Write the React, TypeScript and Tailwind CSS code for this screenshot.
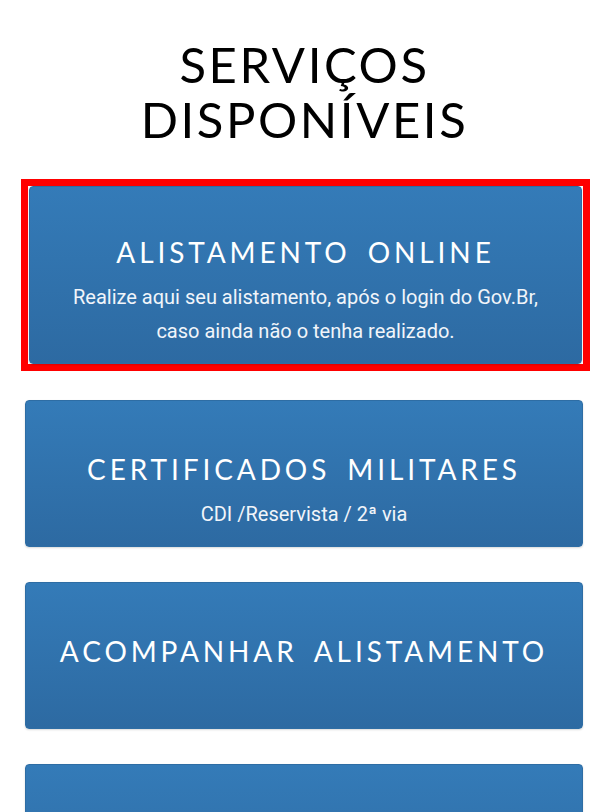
import React from 'react';

interface Service {
  title: string;
  lines: string[];
  highlighted?: boolean;
}

const services: Service[] = [
  {
    title: 'ALISTAMENTO ONLINE',
    lines: ['Realize aqui seu alistamento, após o login do Gov.Br,', 'caso ainda não o tenha realizado.'],
    highlighted: true,
  },
  { title: 'CERTIFICADOS MILITARES', lines: ['CDI /Reservista / 2ª via'] },
  { title: 'ACOMPANHAR ALISTAMENTO', lines: [] },
  { title: 'CONSULTAR SITUAÇÃO', lines: [] },
];

function ServiceCard({ service }: { service: Service }) {
  return (
    <a
      href="#"
      className={`block min-h-[147px] rounded-[4px] border border-[#2e6da4] bg-gradient-to-b from-[#347bb8] to-[#2d6aa2] px-2 pb-[15px] text-center text-white shadow-[0_1px_2px_rgba(0,0,0,0.15)] ${
        service.highlighted ? 'pt-[47px]' : 'pt-[50px]'
      }`}
    >
      <div className="whitespace-nowrap font-['Lato','Liberation_Sans',sans-serif] text-[28px] leading-[36px] tracking-[3.9px] [word-spacing:6px]">
        {service.title}
      </div>
      {service.lines.length > 0 && (
        <div className="mt-[10px] font-['Roboto','Liberation_Sans',sans-serif] text-[20px] leading-[34px] text-[#f1f5fa]">
          {service.lines.map(line => (
            <div key={line}>{line}</div>
          ))}
        </div>
      )}
    </a>
  );
}

export default function App() {
  return (
    <div className="min-h-screen overflow-hidden bg-white pt-[37px]">
      <h1 className="mb-[32px] text-center font-['Lato','Liberation_Sans',sans-serif] text-[49px] leading-[55px] tracking-[2.6px] text-black">
        SERVIÇOS
        <br />
        DISPONÍVEIS
      </h1>

      <div className="flex flex-col gap-[35px] pl-[25px] pr-[26px]">
        {services.map(service =>
          service.highlighted ? (
            <div key={service.title} className="-mb-[6px] -ml-[4px] -mr-[7px] border-[7px] border-[#ff0000] px-[1px]">
              <ServiceCard service={service} />
            </div>
          ) : (
            <ServiceCard key={service.title} service={service} />
          )
        )}
      </div>
    </div>
  );
}
